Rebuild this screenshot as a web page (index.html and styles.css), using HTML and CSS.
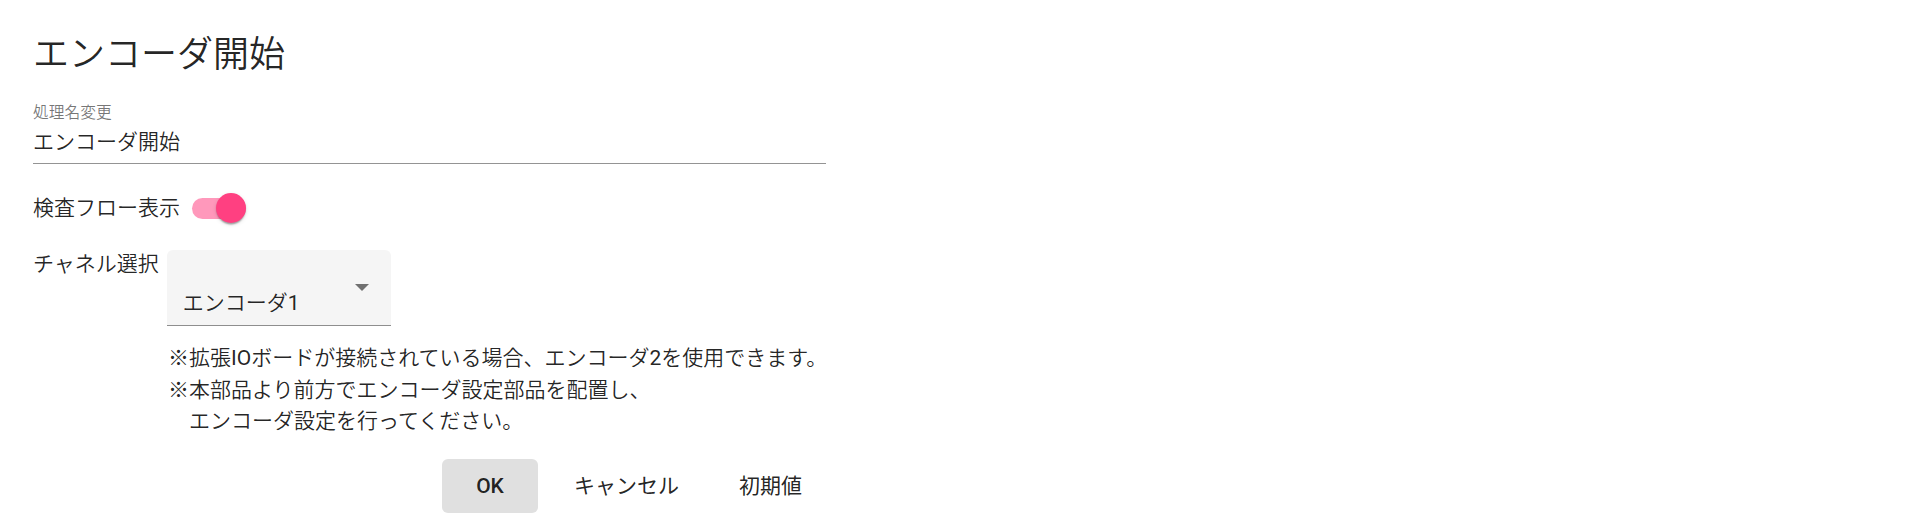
FILE: index.html
```html
<!DOCTYPE html>
<html lang="ja">
<head>
<meta charset="utf-8">
<title>エンコーダ開始</title>
<link rel="stylesheet" href="styles.css">
</head>
<body>
<div class="dialog">
  <h2 class="title">エンコーダ開始</h2>
  <div class="field">
    <label class="field-label">処理名変更</label>
    <div class="field-input">エンコーダ開始</div>
  </div>
  <div class="toggle-row">
    <span class="row-label">検査フロー表示</span>
    <span class="toggle">
      <span class="toggle-track"></span>
      <span class="toggle-thumb"></span>
    </span>
  </div>
  <div class="select-row">
    <span class="row-label">チャネル選択</span>
    <div class="select">
      <span class="select-value">エンコーダ<span class="latin">1</span></span>
      <span class="select-arrow"></span>
    </div>
  </div>
  <div class="notes">
    <div class="note">※拡張<span class="latin">IO</span>ボードが接続されている場合、エンコーダ<span class="latin">2</span>を使用できます。</div>
    <div class="note">※本部品より前方でエンコーダ設定部品を配置し、</div>
    <div class="note indent">エンコーダ設定を行ってください。</div>
  </div>
  <div class="actions">
    <button class="btn btn-focused btn-latin">OK</button>
    <button class="btn">キャンセル</button>
    <button class="btn">初期値</button>
  </div>
</div>
</body>
</html>
```

FILE: styles.css
```css
* { box-sizing: border-box; }
html, body { margin: 0; padding: 0; background: #ffffff; }
body {
  font-family: Roboto, "Noto Sans CJK JP", sans-serif;
  color: rgba(0, 0, 0, 0.87);
  font-size: 21px;
  font-weight: 350;
}
.latin { font-weight: 400; }
.dialog {
  width: 826px;
  padding-left: 33px;
  padding-top: 31px;
}
.title {
  margin: 0;
  font-size: 36px;
  font-weight: 350;
  line-height: 48px;
  height: 48px;
}
.field {
  margin-top: 24px;
  border-bottom: 1.5px solid rgba(0, 0, 0, 0.42);
  padding-bottom: 5.5px;
}
.field-label {
  display: block;
  font-size: 15.75px;
  line-height: 20px;
  color: rgba(0, 0, 0, 0.54);
}
.field-input {
  margin-top: 4px;
  line-height: 30px;
  height: 30px;
}
.toggle-row {
  margin-top: 29.5px;
  display: flex;
  align-items: center;
  gap: 12px;
  height: 30px;
}
.row-label { line-height: 30px; white-space: nowrap; }
.toggle {
  position: relative;
  width: 54px;
  height: 30px;
  display: flex;
  align-items: center;
}
.toggle-track {
  width: 54px;
  height: 21px;
  border-radius: 10.5px;
  background: rgba(255, 64, 129, 0.54);
}
.toggle-thumb {
  position: absolute;
  left: 24px;
  top: 0;
  width: 30px;
  height: 30px;
  border-radius: 50%;
  background: #ff4081;
  box-shadow: 0 3px 1.5px -1.5px rgba(0, 0, 0, 0.2), 0 1.5px 1.5px 0 rgba(0, 0, 0, 0.14), 0 1.5px 4.5px 0 rgba(0, 0, 0, 0.12);
}
.select-row {
  margin-top: 27px;
  display: flex;
  align-items: flex-start;
  gap: 8px;
}
.select-row .row-label { margin-top: -1px; }
.select {
  width: 224px;
  height: 76px;
  background: #f5f5f5;
  border-radius: 6px 6px 0 0;
  border-bottom: 1.5px solid rgba(0, 0, 0, 0.42);
  display: flex;
  justify-content: space-between;
  align-items: flex-start;
  padding: 0 22px 0 16px;
}
.select-value {
  margin-top: 38px;
  line-height: 30px;
}
.select-arrow {
  margin-top: 34px;
  width: 0;
  height: 0;
  border-left: 7px solid transparent;
  border-right: 7px solid transparent;
  border-top: 7px solid rgba(0, 0, 0, 0.54);
}
.notes {
  margin-top: 17px;
  margin-left: 135px;
}
.note {
  line-height: 31.5px;
  white-space: nowrap;
}
.indent { padding-left: 21px; }
.actions {
  margin-top: 21px;
  display: flex;
  justify-content: flex-end;
  gap: 12px;
}
.btn {
  font-family: Roboto, "Noto Sans CJK JP", sans-serif;
  font-size: 21px;
  font-weight: 400;
  color: rgba(0, 0, 0, 0.87);
  background: transparent;
  border: none;
  border-radius: 6px;
  height: 54px;
  min-width: 96px;
  padding: 0 24px;
  line-height: 54px;
}
.btn-latin { font-weight: 500; }
.btn-focused { background: #e0e0e0; }
```
